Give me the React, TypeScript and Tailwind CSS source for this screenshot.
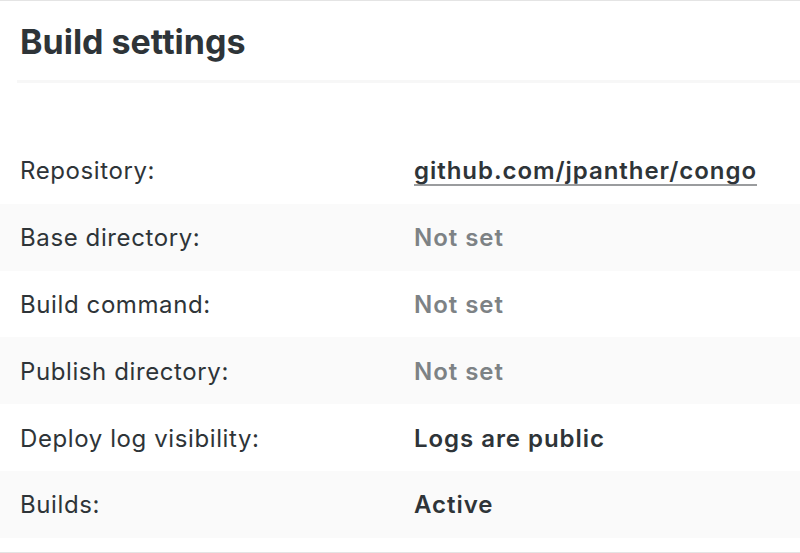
import React from "react";

const rows = [
  { label: "Repository:", value: "github.com/jpanther/congo", kind: "link" },
  { label: "Base directory:", value: "Not set", kind: "muted" },
  { label: "Build command:", value: "Not set", kind: "muted" },
  { label: "Publish directory:", value: "Not set", kind: "muted" },
  { label: "Deploy log visibility:", value: "Logs are public", kind: "strong" },
  { label: "Builds:", value: "Active", kind: "strong" },
];

const App = () => {
  return (
    <div
      className="w-[800px] h-[553px] bg-white text-[#2e3438] border-t border-b border-[#e4e4e4] overflow-hidden"
      style={{ fontFamily: "Inter, 'Noto Sans', sans-serif" }}
    >
      <div className="ml-[17px] h-[82px] border-b-[3px] border-[#f7f7f7]">
        <h1 className="pl-[3px] pt-[19px] text-[34px] leading-[44px] font-bold">
          Build settings
        </h1>
      </div>
      <div className="mt-[54px]">
        {rows.map((row, i) => (
          <div
            key={row.label}
            className={`flex items-center h-[66.8px] px-5 pt-[2px] ${i % 2 === 1 ? "bg-[#fafafa]" : "bg-white"}`}
          >
            <div className="w-[394px] text-[24px] tracking-[0.6px]">{row.label}</div>
            <div className="text-[24px] font-semibold tracking-[0.95px]">
              {row.kind === "link" && (
                <span className="underline decoration-[#9a9c9e] decoration-2 underline-offset-[5px]">
                  {row.value}
                </span>
              )}
              {row.kind === "muted" && <span className="text-[#7d8285]">{row.value}</span>}
              {row.kind === "strong" && <span>{row.value}</span>}
            </div>
          </div>
        ))}
      </div>
    </div>
  );
};

export default App;
